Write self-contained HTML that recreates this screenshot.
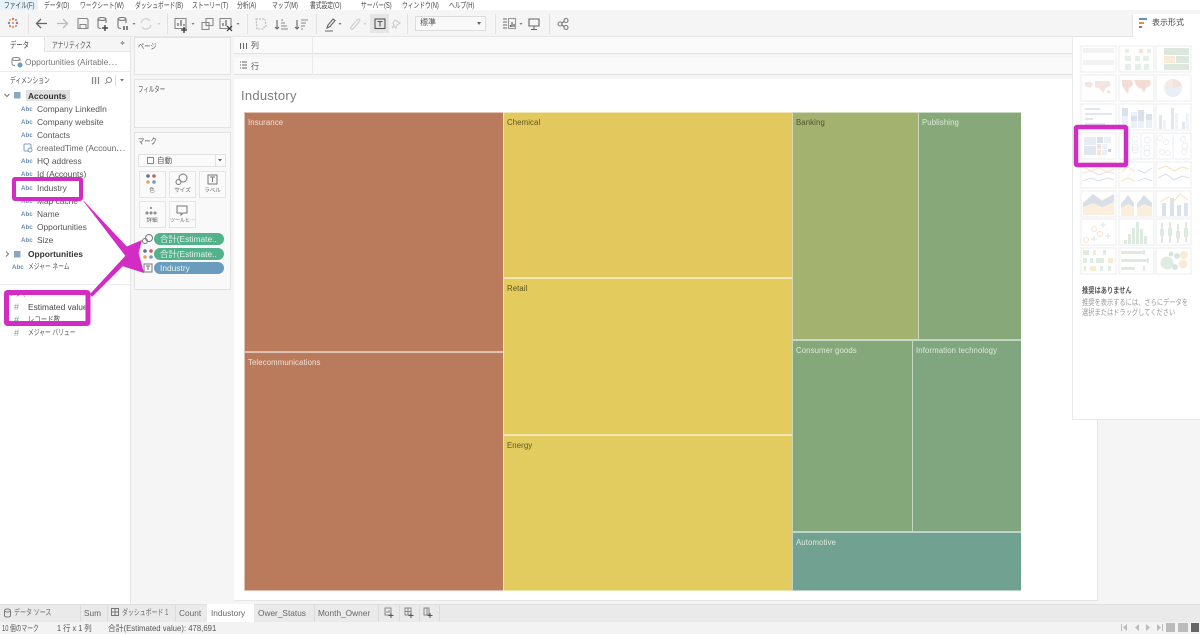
<!DOCTYPE html>
<html><head><meta charset="utf-8"><style>
html,body{margin:0;padding:0;width:1200px;height:634px;overflow:hidden;background:#f5f5f5}
body{position:relative;font-family:"Liberation Sans","Noto Sans CJK JP",sans-serif;font-size:8.4px;color:#555}
#r{position:absolute;left:0;top:0;width:1200px;height:634px;filter:blur(.3px)}
.b,.t,svg{position:absolute}
.t{white-space:nowrap;line-height:12px;height:12px}
.k{transform:scaleX(.72);transform-origin:0 50%}
.m{top:-1px;line-height:13px;font-size:8px;color:#444}
.l{left:37px;color:#555}
.a{left:21px;font-size:6.2px;color:#6a8fb0;font-weight:bold;line-height:13px}
.card{position:absolute;background:#f9f9f9;border:1px solid #e3e3e3;box-sizing:border-box}
.c{position:absolute;box-sizing:border-box;border:1px solid #e4e4e4;border-left-color:rgba(255,255,255,.55);border-top-color:rgba(255,255,255,.55);border-right:0;border-bottom:1px solid rgba(255,255,255,.5)}
.c span{position:absolute;left:3px;top:5px;font-size:7.8px;line-height:10px;letter-spacing:.1px;white-space:nowrap}
.w span{color:#f2e0d6}.d span{color:#5c5520}.g span{color:#dfe9da}
.btn{position:absolute;width:27px;background:#fafafa;border:1px solid #e5e5e5;box-sizing:border-box;text-align:center;font-size:5.6px;color:#666;white-space:nowrap;overflow:hidden;line-height:8px}
.pill{position:absolute;left:154px;width:70px;height:12px;border-radius:6px;color:#e6f2ec;font-size:8.4px;line-height:12px;padding-left:6px;box-sizing:border-box;white-space:nowrap;overflow:hidden}
.tab{top:607px;color:#666;font-size:8.3px}
.sep{position:absolute;width:1px;background:#e0e0e0;top:14px;height:20px}
</style></head><body><div id="r">

<!-- menu -->
<div class="b" style="left:0;top:0;width:1200px;height:10px;background:#fff"></div>
<div class="b" style="left:0;top:0;width:38px;height:10px;background:#e5f1fb"></div>
<span class="t m k" style="left:4px">ファイル(F)</span>
<span class="t m k" style="left:44px">データ(D)</span>
<span class="t m k" style="left:80px">ワークシート(W)</span>
<span class="t m k" style="left:135px">ダッシュボード(B)</span>
<span class="t m k" style="left:192px">ストーリー(T)</span>
<span class="t m k" style="left:237px">分析(A)</span>
<span class="t m k" style="left:272px">マップ(M)</span>
<span class="t m k" style="left:310px">書式設定(O)</span>
<span class="t m k" style="left:361px">サーバー(S)</span>
<span class="t m k" style="left:402px">ウィンドウ(N)</span>
<span class="t m k" style="left:449px">ヘルプ(H)</span>

<!-- toolbar -->
<div class="b" style="left:0;top:10px;width:1200px;height:27px;background:#f5f5f5;border-bottom:1px solid #e6e6e6;box-sizing:border-box"></div>
<div class="sep" style="left:28px"></div><div class="sep" style="left:167px"></div><div class="sep" style="left:247px"></div><div class="sep" style="left:316px"></div><div class="sep" style="left:407px"></div><div class="sep" style="left:495px"></div><div class="sep" style="left:549px"></div>
<div class="b" style="left:370px;top:14px;width:19px;height:19px;background:#e6e6e6"></div>
<svg style="left:0;top:10px" width="600" height="27" viewBox="0 10 600 27" fill="none" stroke="#777" stroke-width="1.1">
 <g stroke="none"><circle cx="13" cy="19" r="1.2" fill="#d77"/><circle cx="13" cy="27" r="1.2" fill="#e9a24a"/><circle cx="9" cy="23" r="1.2" fill="#6a8fb5"/><circle cx="17" cy="23" r="1.2" fill="#d95f5f"/><circle cx="10" cy="20" r="1" fill="#e9a24a"/><circle cx="16" cy="20" r="1" fill="#6a8fb5"/><circle cx="10" cy="26" r="1" fill="#d95f5f"/><circle cx="16" cy="26" r="1" fill="#7a9cc0"/><circle cx="13" cy="23" r="1.1" fill="#c99"/></g>
 <path d="M47 23.500H37M41 19l-4.500 4.500 4.500 4.500" stroke="#666" stroke-width="1.3"/>
 <path d="M57 23.500h10M63 19l4.500 4.500-4.500 4.500" stroke="#bbb" stroke-width="1.3"/>
 <path d="M78 18.500h9l1 1v9h-10zM80 28.500v-4h6v4" stroke="#888"/>
 <ellipse cx="102" cy="19" rx="4" ry="1.500"/><path d="M98 19v8c0 1 2 1.500 3 1.500M106 19v4"/><path d="M105 25v6M102 28h6" stroke="#444" stroke-width="1.4"/>
 <ellipse cx="122" cy="19" rx="4" ry="1.500"/><path d="M118 19v8c0 1 2 1.500 3 1.500M126 19v4"/><path d="M124 26v4M127 26v4" stroke="#444" stroke-width="1.3"/>
 <path d="M132.500 23h3l-1.500 2z" fill="#777" stroke="none"/>
 <path d="M141 23a5 5 0 0 1 9-2M151 25a5 5 0 0 1-9 2" stroke="#ccc"/><path d="M157.500 23h3l-1.500 2z" fill="#ccc" stroke="none"/>
 <path d="M175 18.500h11v10h-11z" stroke="#888"/><path d="M178 26v-3M181 26v-6M184 26v-2" stroke="#555"/><path d="M184 27v6M181 30h6" stroke="#333" stroke-width="1.3"/>
 <path d="M191.500 23h3l-1.500 2z" fill="#777" stroke="none"/>
 <path d="M206 18.500h7v7h-7zM202 22.500h7v7h-7z" stroke="#888"/>
 <path d="M220 18.500h11v10h-11z" stroke="#888"/><path d="M223 26v-3M226 26v-6" stroke="#555"/><path d="M227 26l5 5M232 26l-5 5" stroke="#333" stroke-width="1.2"/>
 <path d="M236.500 23h3l-1.500 2z" fill="#777" stroke="none"/>
 <path d="M256 19h9l1 8h-2l-1 2h-6z" stroke="#bbb" stroke-dasharray="2 1"/>
 <path d="M277 20v9M275 27l2 2 2-2" stroke="#666"/><path d="M281 20h2M281 23h4M281 26h6M281 29h7" stroke="#888"/>
 <path d="M297 20v9M295 27l2 2 2-2" stroke="#666"/><path d="M301 20h7M301 23h5M301 26h4M301 29h2" stroke="#888"/>
 <path d="M327 28l1-3 5-6 2 1.500-5 6zM325 31h8" stroke="#666"/><path d="M338.500 23h3l-1.500 2z" fill="#777" stroke="none"/>
 <path d="M351 27l6-7c2-2 4 0 2 2l-6 7c-2 1-3-1-2-2z" stroke="#ccc"/><path d="M363.500 23h3l-1.500 2z" fill="#ccc" stroke="none"/>
 <rect x="375" y="19" width="10" height="9.500" stroke="#555"/><path d="M377.500 21.500h5M380 21.500v5" stroke="#555"/>
 <path d="M395 20l5 3-3 2-1 3-2-2-2 2 2-3-1-2z" stroke="#ccc"/>
 <g stroke="#999"><path d="M503 19h4M503 22h4M503 25h4M503 28h4" stroke-width="1.400"/><rect x="508.500" y="18.500" width="7" height="10"/><path d="M510.500 27v-2M512 27v-5M514 27v-3" stroke="#555"/></g>
 <path d="M519.500 23h3l-1.500 2z" fill="#777" stroke="none"/>
 <path d="M529 19h10v7h-10zM534 26v3M531 29.500h6" stroke="#666"/>
 <circle cx="560" cy="24" r="2"/><circle cx="566" cy="20.500" r="2"/><circle cx="566" cy="27.500" r="2"/><path d="M562 23l2-1.500M562 25l2 1.500"/>
</svg>
<div class="b" style="left:415px;top:16px;width:71px;height:15px;background:#f9f9f9;border:1px solid #ddd;box-sizing:border-box"></div>
<span class="t" style="left:420px;top:17px;font-size:8px">標準</span>
<svg style="left:476px;top:22px" width="6" height="4"><path d="M1 0h4L3 3z" fill="#666"/></svg>

<!-- tab 表示形式 -->
<div class="b" style="left:1132px;top:14px;width:68px;height:24px;background:#fff;border-left:1px solid #e6e6e6;box-sizing:border-box"></div>
<svg style="left:1139px;top:18px" width="10" height="10"><rect width="8" height="2" fill="#6a8fb5"/><rect y="4" width="5" height="2" fill="#d9914a"/><rect y="8" width="3" height="2" fill="#c95f5f"/></svg>
<span class="t" style="left:1152px;top:17px;font-size:8px;color:#444">表示形式</span>

<!-- left panel -->
<div class="b" style="left:0;top:37px;width:130px;height:567px;background:#fff"></div>
<div class="b" style="left:44px;top:37px;width:86px;height:15px;background:#f5f5f5;border-bottom:1px solid #e6e6e6;border-left:1px solid #e6e6e6;box-sizing:border-box"></div>
<div class="b" style="left:0;top:71px;width:130px;height:1px;background:#ececec"></div>
<div class="b" style="left:130px;top:37px;width:1px;height:567px;background:#e6e6e6"></div>
<span class="t k" style="left:10px;top:39px;font-size:8.4px;color:#444;transform:scaleX(.76)">データ</span>
<span class="t k" style="left:52px;top:39px;font-size:8.4px;color:#555;transform:scaleX(.68)">アナリティクス</span>
<span class="t" style="left:120px;top:38px;font-size:6px">≑</span>
<svg style="left:11px;top:56px" width="12" height="12" fill="none" stroke="#888"><ellipse cx="5" cy="3" rx="4" ry="1.500"/><path d="M1 3v5c0 1 2 1.500 3 1.500M9 3v2"/><circle cx="9" cy="9" r="2.500" fill="#6a9cc5" stroke="none"/></svg>
<span class="t" style="left:25px;top:56px;font-size:8.4px;color:#777">Opportunities (Airtable⋯</span>
<span class="t k" style="left:10px;top:75px;font-size:8.2px;color:#555;transform:scaleX(.7)">ディメンション</span>
<svg style="left:90px;top:75px" width="40" height="12" fill="none" stroke="#888"><path d="M2.500 2v7M5.500 2v7M8.500 2v7" stroke-width="1.300"/><circle cx="19" cy="5" r="2.500"/><path d="M17 7l-2 2"/><path d="M25.500 0v11" stroke="#ddd"/><path d="M30 4h4l-2 2.500z" fill="#777" stroke="none"/></svg>
<div class="b" style="left:26px;top:90px;width:44px;height:11px;background:#e1e1e1"></div>
<svg style="left:3px;top:91px" width="20" height="10" fill="none"><path d="M1.500 3l2.500 2.500L6.500 3" stroke="#777"/><rect x="11" y="1" width="6.500" height="6.500" fill="#8ba7bf"/></svg>
<span class="t" style="left:28px;top:90px;font-weight:bold;color:#333">Accounts</span>

<span class="t a" style="top:103px">Abc</span><span class="t l" style="top:103px">Company LinkedIn</span>
<span class="t a" style="top:116px">Abc</span><span class="t l" style="top:116px">Company website</span>
<span class="t a" style="top:129px">Abc</span><span class="t l" style="top:129px">Contacts</span>
<svg style="left:23px;top:143px" width="10" height="10" fill="none" stroke="#7f9db8"><rect x="1" y="1" width="7" height="7" rx="1"/><circle cx="7" cy="7" r="2" fill="#fff"/></svg>
<span class="t l" style="top:142px;color:#666">createdTime (Accoun⋯</span>
<span class="t a" style="top:155px">Abc</span><span class="t l" style="top:155px">HQ address</span>
<span class="t a" style="top:168px">Abc</span><span class="t l" style="top:168px">Id (Accounts)</span>
<span class="t a" style="top:182px">Abc</span><span class="t l" style="top:182px">Industry</span>
<span class="t a" style="top:195px">Abc</span><span class="t l" style="top:195px">Map cache</span>
<span class="t a" style="top:208px">Abc</span><span class="t l" style="top:208px">Name</span>
<span class="t a" style="top:221px">Abc</span><span class="t l" style="top:221px">Opportunities</span>
<span class="t a" style="top:234px">Abc</span><span class="t l" style="top:234px">Size</span>
<svg style="left:3px;top:250px" width="20" height="10" fill="none"><path d="M3 1.500l2.500 2.500L3 6.500" stroke="#777"/><rect x="11" y="1" width="6.500" height="6.500" fill="#8ba7bf"/></svg>
<span class="t" style="left:28px;top:248px;font-weight:bold;color:#333">Opportunities</span>
<span class="t a" style="left:12px;top:261px">Abc</span><span class="t k" style="left:28px;top:261px;font-size:8px">メジャー ネーム</span>
<div class="b" style="left:0;top:284px;width:130px;height:1px;background:#ececec"></div>
<span class="t k" style="left:10px;top:288px;font-size:8px">メジャー</span>
<span class="t" style="left:14px;top:301px;color:#69a98f;font-size:9px">#</span><span class="t" style="left:28px;top:301px;color:#444">Estimated value</span>
<span class="t" style="left:14px;top:314px;color:#69a98f;font-size:9px">#</span><span class="t k" style="left:28px;top:314px;font-size:8px;transform:scaleX(.8)">レコード数</span>
<span class="t" style="left:14px;top:327px;color:#69a98f;font-size:9px">#</span><span class="t k" style="left:28px;top:327px;font-size:8px">メジャー バリュー</span>

<!-- shelves -->
<div class="card" style="left:134px;top:37px;width:97px;height:38px"></div>
<span class="t k" style="left:138px;top:41px;font-size:7.8px;transform:scaleX(.8)">ページ</span>
<div class="card" style="left:134px;top:79px;width:97px;height:49px"></div>
<span class="t k" style="left:138px;top:84px;font-size:7.8px;transform:scaleX(.7)">フィルター</span>

<div class="b" style="left:234px;top:37px;width:838px;height:17px;background:#fafafa;border-bottom:1px solid #e2e2e2;box-sizing:border-box"></div>
<div class="b" style="left:234px;top:58px;width:838px;height:17px;background:#fafafa;border-bottom:1px solid #e2e2e2;box-sizing:border-box"></div>
<div class="b" style="left:312px;top:37px;width:1px;height:38px;background:#eaeaea"></div>
<svg style="left:239px;top:41px" width="10" height="30" fill="none" stroke="#666"><path d="M1.500 2v6M4.500 2v6M7.500 2v6"/><path d="M1 22h1M3 22h5M1 25h1M3 25h5M1 28h1M3 28h5" transform="translate(0,-1)"/></svg>
<span class="t" style="left:251px;top:40px;font-size:8px">列</span>
<span class="t" style="left:251px;top:61px;font-size:8px">行</span>

<!-- marks -->
<div class="card" style="left:134px;top:132px;width:97px;height:158px"></div>
<span class="t k" style="left:138px;top:136px;font-size:7.8px;color:#555;transform:scaleX(.8)">マーク</span>
<div class="b" style="left:138px;top:154px;width:88px;height:13px;background:#fbfbfb;border:1px solid #e2e2e2;box-sizing:border-box"></div>
<div class="b" style="left:215px;top:154px;width:1px;height:13px;background:#e2e2e2"></div>
<div class="b" style="left:147px;top:157px;width:5px;height:5px;border:1px solid #888"></div>
<span class="t" style="left:157px;top:155px;font-size:7.6px">自動</span>
<svg style="left:217px;top:158px" width="7" height="5"><path d="M1 1h4L3 3.500z" fill="#666"/></svg>

<div class="btn" style="left:138.500px;top:171px;height:27px;padding-top:15px">色</div>
<div class="btn" style="left:169px;top:171px;height:27px;padding-top:15px">サイズ</div>
<div class="btn" style="left:199px;top:171px;height:27px;padding-top:15px">ラベル</div>
<div class="btn" style="left:138.500px;top:201px;height:27px;padding-top:15px">詳細</div>
<div class="btn" style="left:169px;top:201px;height:27px;padding-top:15px;font-size:5px">ツールヒ⋯</div>
<svg style="left:134px;top:171px" width="100" height="60" fill="none" stroke="#777">
 <circle cx="14" cy="5" r="1.800" fill="#6b6b9a" stroke="none"/><circle cx="20" cy="5" r="1.800" fill="#c95f5f" stroke="none"/><circle cx="14" cy="11" r="1.800" fill="#e2a65e" stroke="none"/><circle cx="20" cy="11" r="1.800" fill="#6f9cc4" stroke="none"/>
 <circle cx="49" cy="7" r="4"/><circle cx="44.500" cy="11" r="2.500"/>
 <rect x="74" y="4" width="9" height="9"/><path d="M76 6h5M78.500 6v5"/>
 <circle cx="17" cy="37" r="1" fill="#777" stroke="none"/><circle cx="13" cy="42" r="1"/><circle cx="17" cy="42" r="1"/><circle cx="21" cy="42" r="1"/>
 <path d="M43 35h10v7h-4l-2 2v-2h-4z"/>
</svg>
<svg style="left:141px;top:233px" width="14" height="42" fill="none" stroke="#777"><circle cx="8" cy="5" r="3.500"/><circle cx="4" cy="8" r="2.500"/>
 <circle cx="4" cy="18" r="1.800" fill="#6b6b9a" stroke="none"/><circle cx="10" cy="18" r="1.800" fill="#c95f5f" stroke="none"/><circle cx="4" cy="24" r="1.800" fill="#e2a65e" stroke="none"/><circle cx="10" cy="24" r="1.800" fill="#6f9cc4" stroke="none"/>
 <rect x="3" y="31" width="8" height="8"/><path d="M5 33h4M7 33v4"/></svg>
<div class="pill" style="top:233px;background:#53b18c">合計(Estimate..</div>
<div class="pill" style="top:248px;background:#53b18c">合計(Estimate..</div>
<div class="pill" style="top:262px;background:#6a9dbd">Industry</div>

<!-- viz -->
<div class="b" style="left:234px;top:79px;width:864px;height:522px;background:#fff;border-right:1px solid #e6e6e6;border-bottom:1px solid #e6e6e6;box-sizing:border-box"></div>
<span class="t" style="left:241px;top:89px;font-size:13px;height:14px;line-height:14px;color:#7d7d7d;letter-spacing:.25px">Industory</span>

<div class="c w" style="left:244px;top:112px;width:259px;height:240px;background:#ba7a5c"><span>Insurance</span></div>
<div class="c w" style="left:244px;top:352px;width:259px;height:239px;background:#ba7a5c"><span>Telecommunications</span></div>
<div class="c d" style="left:503px;top:112px;width:289px;height:166px;background:#e3c95d"><span>Chemical</span></div>
<div class="c d" style="left:503px;top:278px;width:289px;height:157px;background:#e3cb5e"><span>Retail</span></div>
<div class="c d" style="left:503px;top:435px;width:289px;height:156px;background:#e3cc5f"><span>Energy</span></div>
<div class="c" style="left:792px;top:112px;width:126px;height:228px;background:#a3b26e"><span style="color:#4d5530">Banking</span></div>
<div class="c g" style="left:918px;top:112px;width:103px;height:228px;background:#87a97a"><span>Publishing</span></div>
<div class="c g" style="left:792px;top:340px;width:120px;height:192px;background:#85a87b"><span>Consumer goods</span></div>
<div class="c g" style="left:912px;top:340px;width:109px;height:192px;background:#80a680"><span>Information technology</span></div>
<div class="c g" style="left:792px;top:532px;width:229px;height:59px;background:#71a190"><span>Automotive</span></div>

<!-- show me -->
<div class="b" style="left:1072px;top:37px;width:128px;height:383px;background:#fff;border-left:1px solid #e9e9e9;border-bottom:1px solid #e9e9e9;box-sizing:border-box"></div>
<svg style="left:1072px;top:37px;opacity:.72" width="128" height="240" viewBox="1072 37 128 240">
 <g fill="#fff" stroke="#e6e6e6">
  <rect x="1081" y="46" width="35" height="26"/><rect x="1119" y="46" width="35" height="26"/><rect x="1156" y="46" width="35" height="26"/>
  <rect x="1081" y="75" width="35" height="26"/><rect x="1119" y="75" width="35" height="26"/><rect x="1156" y="75" width="35" height="26"/>
  <rect x="1081" y="104" width="35" height="26"/><rect x="1119" y="104" width="35" height="26"/><rect x="1156" y="104" width="35" height="26"/>
  <rect x="1081" y="133" width="35" height="26"/><rect x="1119" y="133" width="35" height="26"/><rect x="1156" y="133" width="35" height="26"/>
  <rect x="1081" y="162" width="35" height="26"/><rect x="1119" y="162" width="35" height="26"/><rect x="1156" y="162" width="35" height="26"/>
  <rect x="1081" y="191" width="35" height="26"/><rect x="1119" y="191" width="35" height="26"/><rect x="1156" y="191" width="35" height="26"/>
  <rect x="1081" y="219" width="35" height="26"/><rect x="1119" y="219" width="35" height="26"/><rect x="1156" y="219" width="35" height="26"/>
  <rect x="1081" y="248" width="35" height="26"/><rect x="1119" y="248" width="35" height="26"/><rect x="1156" y="248" width="35" height="26"/>
 </g>
 <g fill="#eee"><rect x="1083" y="48" width="31" height="5"/><rect x="1083" y="60" width="31" height="5"/></g>
 <g fill="#dce9df"><rect x="1125" y="49" width="4" height="4"/><rect x="1139" y="49" width="4" height="4" fill="#f3d9bb"/><rect x="1147" y="49" width="4" height="4"/><rect x="1125" y="56" width="6" height="5"/><rect x="1135" y="56" width="5" height="5"/><rect x="1143" y="56" width="6" height="5"/><rect x="1125" y="64" width="6" height="6"/><rect x="1135" y="64" width="6" height="6"/><rect x="1144" y="64" width="5" height="6"/></g>
 <g fill="#cfe0d2"><rect x="1164" y="48" width="25" height="7"/><rect x="1164" y="56" width="11" height="7" fill="#f6e3c4"/><rect x="1176" y="56" width="13" height="7"/><rect x="1164" y="64" width="25" height="6"/></g>
 <g fill="#f0dcd8"><path d="M1085 82h6l2 3-3 3-5-2zM1095 81h14l2 4-5 3-3 5-3-4-5-2zM1107 90l4 1-1 3-3-1z"/></g>
 <g fill="#f0cfc8"><path d="M1122 80h10l1 5-4 3-1 6-3-4-3-5zM1134 80h16l1 5-5 3-2 5-2-4-3-1-3-3z"/></g>
 <circle cx="1173" cy="88" r="9" fill="#e3e9f5"/><path d="M1173 88v-9a9 9 0 0 1 9 7z" fill="#f0d8d2"/><path d="M1173 88v-9a9 9 0 0 0-9 9z" fill="#f3e2dc"/>
 <g fill="#d5deea"><rect x="1085" y="108" width="15" height="2"/><rect x="1085" y="113" width="27" height="2"/><rect x="1085" y="118" width="8" height="2"/><rect x="1085" y="123" width="20" height="2"/></g>
 <g fill="#e5edf7"><rect x="1122" y="108" width="6" height="20"/><rect x="1131" y="112" width="6" height="16"/><rect x="1138" y="110" width="6" height="18"/><rect x="1146" y="114" width="6" height="14"/></g>
 <g fill="#cdd6e3"><rect x="1122" y="108" width="6" height="8"/><rect x="1131" y="116" width="6" height="5"/><rect x="1138" y="110" width="6" height="11"/><rect x="1146" y="114" width="6" height="6"/></g>
 <g fill="#d5deea"><rect x="1159" y="115" width="3" height="14"/><rect x="1163" y="120" width="3" height="9" fill="#e9f0f9"/><rect x="1171" y="108" width="3" height="21"/><rect x="1175" y="113" width="3" height="16" fill="#e9f0f9"/><rect x="1182" y="122" width="3" height="7"/><rect x="1186" y="114" width="3" height="15" fill="#e9f0f9"/></g>
 <g><rect x="1084" y="137" width="12" height="8" fill="#dfe6f1"/><rect x="1084" y="146" width="12" height="9" fill="#d6dfec"/><rect x="1097" y="137" width="6" height="6" fill="#cbd5e3"/><rect x="1104" y="137" width="7" height="6" fill="#e3ecf7"/><rect x="1097" y="144" width="4" height="5" fill="#f3d4c8"/><rect x="1097" y="150" width="4" height="5" fill="#f3d9c9"/><rect x="1102" y="144" width="5" height="5" fill="#e3ecf7"/><rect x="1102" y="150" width="5" height="5" fill="#dfe8f3"/><rect x="1108" y="149" width="3" height="3" fill="#b7c3d4"/></g>
 <g fill="none" stroke="#e3e8ef"><circle cx="1135" cy="139" r="3"/><circle cx="1147" cy="140" r="3"/><circle cx="1135" cy="147" r="3"/><circle cx="1135" cy="150" r="3"/><circle cx="1147" cy="148" r="3"/><circle cx="1147" cy="153" r="3"/><circle cx="1160" cy="138" r="2.500"/><circle cx="1166" cy="142" r="2.500"/><circle cx="1162" cy="152" r="2.500"/><circle cx="1168" cy="153" r="2.500"/><circle cx="1183" cy="139" r="2.500"/><circle cx="1185" cy="146" r="3"/><circle cx="1184" cy="152" r="2.500"/><path d="M1173 134v24M1141 134v24"/></g>
 <g fill="none" stroke-width="1"><path d="M1083 167l8 4 8-3 8 4 7-3" stroke="#f2d9a7"/><path d="M1083 173l8-2 8 4 8-3 7 1" stroke="#eed2cc"/><path d="M1083 181l8-3 8 3 8-3 7 2" stroke="#c9d5e5"/><path d="M1121 172l7-5 6 4 1 0M1121 181l7-3 7 3" stroke="#f2d9a7"/><path d="M1138 170l7 3 7-5M1138 181l7-3 7 3" stroke="#c9d5e5"/><path d="M1158 169l8-3 8 5 8-4 7 2" stroke="#f2d9a7"/><path d="M1158 178l8-4 8 6 8-4 7 2" stroke="#c9d5e5"/></g>
 <path d="M1083 204l10-10 9 6 12-6v21h-31z" fill="#f8e9cf"/><path d="M1083 203l10-9 9 7 12-7v8l-12 5-9-4-10 4z" fill="#c9d3e0"/>
 <path d="M1121 207l7-11 6 8v12h-13z" fill="#f8e9cf"/><path d="M1121 204l7-9 6 8v4l-6-3-7 4z" fill="#c9d3e0"/><path d="M1137 207l7-11 8 8v12h-15z" fill="#f8e9cf"/><path d="M1137 204l7-9 8 8v4l-8-3-7 4z" fill="#c9d3e0"/>
 <g fill="#ccd8e8"><rect x="1162" y="203" width="4" height="13"/><rect x="1170" y="198" width="4" height="18"/><rect x="1177" y="205" width="4" height="11"/><rect x="1184" y="203" width="4" height="13"/></g><path d="M1160 202l8-5 6 4 6-7 8 6" fill="none" stroke="#f2d9a7"/>
 <g fill="none" stroke="#e9e2cb"><circle cx="1086" cy="240" r="2.500" stroke="#f6dcb5"/><circle cx="1094" cy="229" r="2.500" stroke="#f6dcb5"/><circle cx="1100" cy="234" r="2.500" stroke="#f6dcb5"/><path d="M1103 222v6M1100 225h6M1094 236v6M1091 239h6M1108 233v6M1105 236h6" stroke="#cfe3d3"/></g>
 <g fill="#cfe2d4"><rect x="1124" y="240" width="3" height="4"/><rect x="1128" y="234" width="3" height="10"/><rect x="1132" y="228" width="3" height="16"/><rect x="1136" y="222" width="3" height="22"/><rect x="1140" y="229" width="3" height="15"/><rect x="1144" y="236" width="3" height="8"/></g>
 <g stroke="#aebbb5"><path d="M1162 223v20M1170 222v21M1178 224v19M1186 222v20" fill="none"/><rect x="1160" y="229" width="4" height="7" fill="#cfe2d4" stroke="none"/><rect x="1168" y="228" width="4" height="8" fill="#cfe2d4" stroke="none"/><rect x="1176" y="231" width="4" height="7" fill="#cfe2d4" stroke="none"/><rect x="1184" y="228" width="4" height="9" fill="#cfe2d4" stroke="none"/></g>
 <g fill="#d3e5d8"><rect x="1083" y="250" width="6" height="5"/><rect x="1093" y="250" width="3" height="5" fill="#f7e2c0"/><rect x="1103" y="250" width="3" height="5"/><rect x="1083" y="258" width="4" height="5"/><rect x="1090" y="258" width="3" height="5"/><rect x="1096" y="258" width="8" height="5"/><rect x="1108" y="258" width="5" height="5" fill="#f7e2c0"/><rect x="1084" y="266" width="2" height="5"/><rect x="1090" y="266" width="6" height="5" fill="#f7e2c0"/><rect x="1100" y="266" width="3" height="5"/><rect x="1108" y="266" width="3" height="5"/></g>
 <g fill="#cfe2d4"><rect x="1121" y="251" width="22" height="3"/><rect x="1121" y="259" width="26" height="3"/><rect x="1121" y="267" width="14" height="3"/><rect x="1143" y="250" width="2" height="5" fill="#ddd"/><rect x="1147" y="258" width="2" height="5" fill="#ddd"/><rect x="1143" y="266" width="2" height="5" fill="#ddd"/></g>
 <g><circle cx="1167" cy="263" r="6.500" fill="#d4e6d9"/><circle cx="1177" cy="256" r="3" fill="#c7dfce"/><circle cx="1171" cy="254" r="2.500" fill="#c7dfce"/><circle cx="1184" cy="255" r="4" fill="#f8e6c8"/><circle cx="1183" cy="264" r="4.500" fill="#f8e6c8"/><circle cx="1175" cy="267" r="3" fill="#c7dfce"/></g>
</svg>
<span class="t k" style="left:1082px;top:285px;font-size:7.8px;font-weight:bold;color:#555;transform:scaleX(.8)">推奨はありません</span>
<span class="t k" style="left:1082px;top:297px;font-size:7.8px;color:#999;transform:scaleX(.8)">推奨を表示するには、さらにデータを</span>
<span class="t k" style="left:1082px;top:307px;font-size:7.8px;color:#999;transform:scaleX(.8)">選択またはドラッグしてください</span>

<!-- bottom tabs -->
<div class="b" style="left:0;top:604px;width:1200px;height:18px;background:#eaeaea;border-top:1px solid #e0e0e0;box-sizing:border-box"></div>
<div class="b" style="left:0;top:622px;width:1200px;height:12px;background:#f3f3f3"></div>
<div class="b" style="left:207px;top:604px;width:47px;height:18px;background:#fff"></div>
<svg style="left:3px;top:608px" width="10" height="11" fill="none" stroke="#777"><ellipse cx="4.500" cy="2.500" rx="3" ry="1.500"/><path d="M1.500 2.500v5c0 1 1.500 1.500 3 1.500s3-.5 3-1.500v-5"/></svg>
<span class="t tab k" style="left:14px;font-size:8px;transform:scaleX(.75)">データ ソース</span>
<div class="b" style="left:80px;top:605px;width:1px;height:17px;background:#dcdcdc"></div>
<span class="t tab" style="left:84px">Sum</span>
<div class="b" style="left:107px;top:605px;width:1px;height:17px;background:#dcdcdc"></div>
<svg style="left:111px;top:608px" width="10" height="10" fill="none" stroke="#777"><path d="M.5 .5h7v7h-7zM.5 4h7M4 .5v7"/></svg>
<span class="t tab k" style="left:122px;font-size:8px;transform:scaleX(.74)">ダッシュボード 1</span>
<div class="b" style="left:175px;top:605px;width:1px;height:17px;background:#dcdcdc"></div>
<span class="t tab" style="left:179px">Count</span>
<span class="t tab" style="left:211px">Industory</span>
<span class="t tab" style="left:258px">Ower_Status</span>
<div class="b" style="left:314px;top:605px;width:1px;height:17px;background:#dcdcdc"></div>
<span class="t tab" style="left:318px">Month_Owner</span>
<div class="b" style="left:378px;top:605px;width:1px;height:17px;background:#dcdcdc"></div>
<div class="b" style="left:399px;top:605px;width:1px;height:17px;background:#dcdcdc"></div>
<div class="b" style="left:419px;top:605px;width:1px;height:17px;background:#dcdcdc"></div>
<div class="b" style="left:439px;top:605px;width:1px;height:17px;background:#dcdcdc"></div>
<svg style="left:384px;top:607px" width="52" height="13" fill="none" stroke="#888"><path d="M1 1h6v7H1zM3 6V4M5 6V3"/><path d="M7 6v5M4.500 8.500h5" stroke="#555"/><path d="M21 1h6v7h-6zM21 4.500h6M24 1v7"/><path d="M27 6v5M24.500 8.500h5" stroke="#555"/><path d="M40 1h5v7h-5zM43 1v7"/><path d="M46 6v5M43.500 8.500h5" stroke="#555"/></svg>
<span class="t k" style="left:2px;top:623px;font-size:8px">10 個のマーク</span>
<span class="t" style="left:57px;top:623px;font-size:8px;transform:scaleX(.92);transform-origin:0 50%">1 行 x 1 列</span>
<span class="t" style="left:108px;top:623px;font-size:8px;transform:scaleX(.97);transform-origin:0 50%">合計(Estimated value): 478,691</span>
<svg style="left:1115px;top:622px" width="85" height="12"><g fill="#bbb"><path d="M6 2v7h1V2zM12 2L8 5.500 12 9z"/><path d="M20 5.500L24 2v7z"/><path d="M31 2l4 3.500L31 9z"/><path d="M42 2l4 3.500L42 9zM47 2v7h1V2z"/></g><g fill="#bbb"><rect x="51" y="1" width="9" height="9"/></g><rect x="63" y="1" width="10" height="9" fill="#bbb"/><rect x="76" y="1" width="8" height="9" fill="#666"/></svg>

<!-- magenta annotations -->
<svg style="left:0;top:0" width="1200" height="634" fill="none">
 <rect x="14" y="179" width="67" height="20" rx="1" stroke="#d22cc4" stroke-width="4"/>
 <rect x="6.500" y="292.500" width="81.500" height="31" rx="1" stroke="#d22cc4" stroke-width="5"/>
 <rect x="1076" y="127" width="50" height="38" rx="1" stroke="#d22cc4" stroke-width="4.500"/>
 <path d="M90 294L127 254 121 249 142 240 136 263 131 258 92 297z" fill="#d22cc4"/>
 <path d="M83 200L130 250 137 247 144 273 122 266 127 258 84 202z" fill="#d22cc4"/>
</svg>
</div></body></html>
